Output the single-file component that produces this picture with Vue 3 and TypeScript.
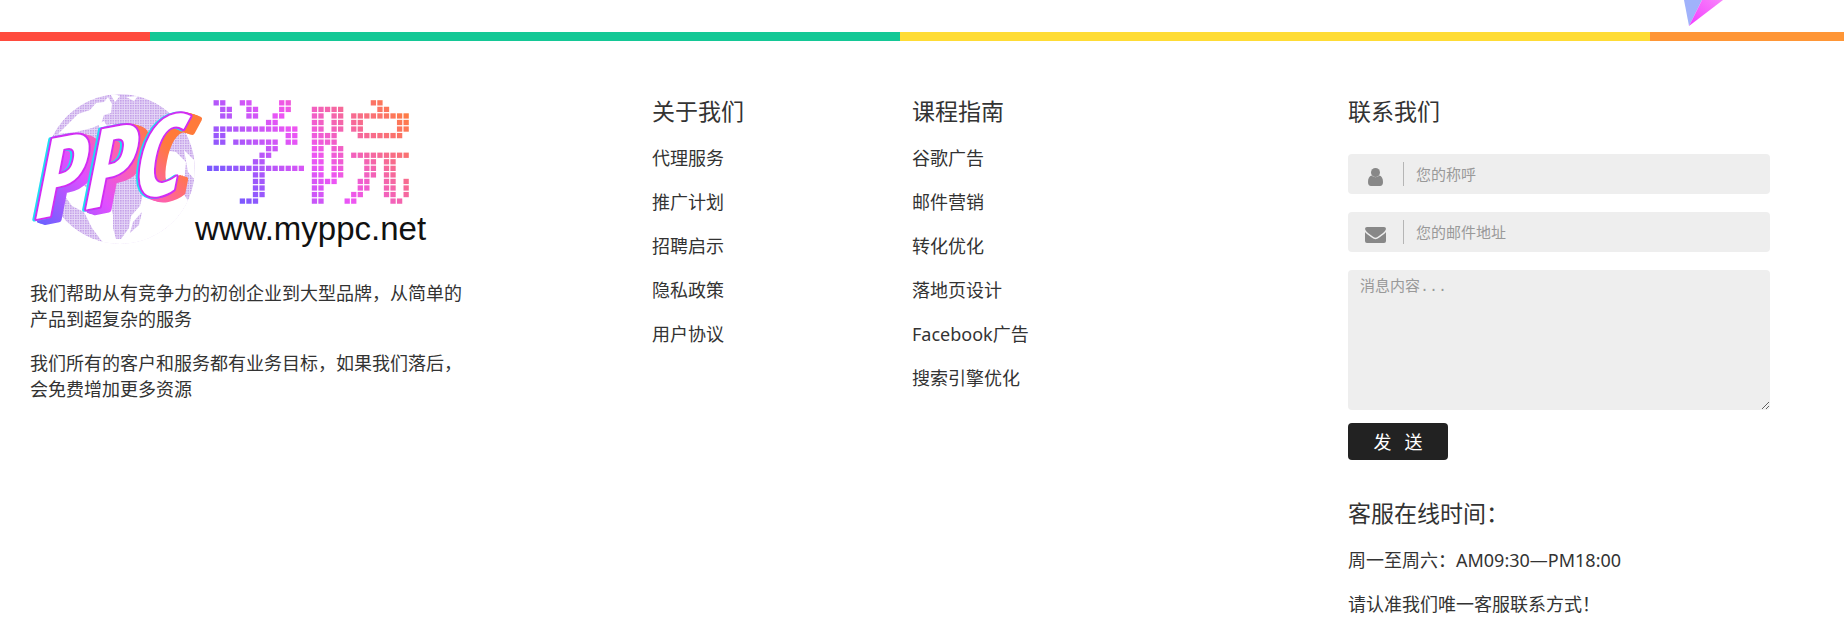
<script setup lang="ts">
interface LinkGroup {
  title: string
  links: string[]
}

const groups: LinkGroup[] = [
  { title: '关于我们', links: ['代理服务', '推广计划', '招聘启示', '隐私政策', '用户协议'] },
  { title: '课程指南', links: ['谷歌广告', '邮件营销', '转化优化', '落地页设计', 'Facebook广告', '搜索引擎优化'] },
]

// Mosaic of the brand mark, one character per tile.
const mosaic: string[] = [
  '.##..##....##............##....',
  '..##..##...##...#####.....##...',
  '..##..##..##....##.##.#########',
  '.........##.....##.##.##.....##',
  '.#############..##.##.##.....##',
  '.##.........##..####...#######.',
  '.##.#######.##..####...........',
  '.........##.....##.##..........',
  '........##......##.##.#########',
  '.......##.......##.##...##.##..',
  '###############.##.##...##.##..',
  '.......##.......##.##...##.##..',
  '.......##.......####...##..##.#',
  '.......##.......##.....##..##.#',
  '.......##.......##....##...##.#',
  '.....###........##...##.....##.',
]

const pitch = 6.55
const tiles = mosaic.flatMap((row, r) =>
  [...row].flatMap((cell, c) => (cell === '#' ? [{ x: 207 + c * pitch, y: 100.2 + r * pitch }] : [])),
)

const depth = [8, 6, 4, 2]
</script>

<template>
  <div class="page">
    <div class="top">
      <svg class="shard" width="40" height="27" viewBox="0 0 40 27" aria-hidden="true">
        <defs>
          <linearGradient id="shard" x1="0" y1="1" x2="1" y2="0">
            <stop offset="0" stop-color="#f33cff" />
            <stop offset="1" stop-color="#f884fb" />
          </linearGradient>
        </defs>
        <path d="M0 0H18L5 26Z" fill="#a0b2fb" />
        <path d="M18 0H39L5 26Z" fill="url(#shard)" />
      </svg>
    </div>
    <div class="stripe"></div>

    <footer class="footer">
      <section class="about">
        <svg class="logo" viewBox="30 90 410 165" role="img" aria-label="PPC学院">
          <defs>
            <linearGradient id="tile" gradientUnits="userSpaceOnUse" x1="235" y1="205" x2="385" y2="85">
              <stop offset="0" stop-color="#7459ff" />
              <stop offset="0.48" stop-color="#ed55f5" />
              <stop offset="1" stop-color="#ff7c42" />
            </linearGradient>
            <linearGradient id="brush" gradientUnits="userSpaceOnUse" x1="60" y1="215" x2="175" y2="130">
              <stop offset="0" stop-color="#5f62ff" />
              <stop offset="0.45" stop-color="#e04fff" />
              <stop offset="0.75" stop-color="#ff62a8" />
              <stop offset="1" stop-color="#ff7a3a" />
            </linearGradient>
            <pattern id="mesh" width="2.5" height="2.5" patternUnits="userSpaceOnUse">
              <rect width="2.5" height="2.5" fill="#e6d8f7" />
              <rect width="1.6" height="1.6" fill="#c4a0e8" />
            </pattern>
            <clipPath id="sphere"><circle cx="120" cy="169" r="75" /></clipPath>
          </defs>

          <g clip-path="url(#sphere)">
            <circle cx="120" cy="169" r="75" fill="url(#mesh)" />
            <path
              d="M58 134L66 126L78 114L90 110L96 103L104 102L108 97L112 104L111 113L104 115L101 124L92 128L76 132Z"
              fill="#fff"
            />
            <path d="M109 92L120 96L115 102Z M126 97L138 96L134 101Z" fill="#fff" />
            <path d="M98 124L104 121L107 126L112 124L116 129L124 125L130 133L120 134L110 130L102 133Z" fill="#fff" />
            <path
              d="M52 176L66 188L82 184L92 192L102 196L110 203L113 215L113 228L116 239L121 239L129 228L131 216L140 206L144 190L152 184L180 188L190 204L182 212L172 224L158 234L144 243L118 250L104 244L92 228L84 212L72 206L62 192Z"
              fill="#fff"
            />
            <path d="M150 140L160 136L164 150L176 152L186 162L184 184L170 180L152 190Z M184 150L194 160L195 180L188 172Z" fill="#fff" />
            <path d="M130 233L133 222L142 212L139 225Z" fill="url(#mesh)" />
          </g>

          <g class="brand" transform="rotate(-11 100 170) skewX(-9)">
            <text
              v-for="d in depth"
              :key="d"
              :x="55 + d"
              :y="207 + d / 2"
              fill="url(#brush)"
              stroke="url(#brush)"
              stroke-width="5"
            >PPC</text>
            <text x="52" y="206" fill="#22dcf4" stroke="#22dcf4" stroke-width="4">PPC</text>
            <text class="face" x="54" y="206">PPC</text>
          </g>

          <rect v-for="(t, i) in tiles" :key="i" :x="t.x" :y="t.y" width="5.3" height="5.3" fill="url(#tile)" />
          <text class="site" x="195" y="240">www.myppc.net</text>
        </svg>
        <p>我们帮助从有竞争力的初创企业到大型品牌，从简单的产品到超复杂的服务</p>
        <p>我们所有的客户和服务都有业务目标，如果我们落后，会免费增加更多资源</p>
      </section>

      <nav v-for="g in groups" :key="g.title" class="column" :aria-label="g.title">
        <h2>{{ g.title }}</h2>
        <ul>
          <li v-for="l in g.links" :key="l"><a href="#">{{ l }}</a></li>
        </ul>
      </nav>

      <section class="column">
        <h2>联系我们</h2>
        <form @submit.prevent>
          <div class="field">
            <label for="name" aria-label="您的称呼">
              <svg width="15" height="18" viewBox="0 0 15 18" aria-hidden="true">
                <path d="M3.5 7.5C1.3 8.3 0 10.5 0 14C0 16.5 1.1 18 3 18H12C13.9 18 15 16.5 15 14C15 10.5 13.7 8.3 11.5 7.5A5.5 5.5 0 0 1 3.5 7.5Z" />
                <circle cx="7.5" cy="4.5" r="4.5" />
              </svg>
            </label>
            <input id="name" type="text" placeholder="您的称呼" />
          </div>
          <div class="field">
            <label for="email" aria-label="您的邮件地址">
              <svg width="21" height="16" viewBox="0 0 21 16" aria-hidden="true">
                <path d="M0 2Q0 0 2 0H19Q21 0 21 2Q20.5 4 18 6L12.5 10Q10.5 11.5 8.5 10L3 6Q0.5 4 0 2Z" />
                <path d="M0 5Q1 6.5 7 10.8Q10.5 13.5 14 10.8Q20 6.5 21 5V14Q21 16 19 16H2Q0 16 0 14Z" />
              </svg>
            </label>
            <input id="email" type="email" placeholder="您的邮件地址" />
          </div>
          <textarea aria-label="消息内容" placeholder="消息内容..."></textarea>
          <button type="submit"><span>发</span><span>送</span></button>
        </form>
        <h2>客服在线时间：</h2>
        <p>周一至周六：AM09:30—PM18:00</p>
        <p>请认准我们唯一客服联系方式！</p>
      </section>
    </footer>
  </div>
</template>

<style>
body {
  margin: 0;
  background: #fff;
}
</style>

<style scoped>
.page {
  color: #333;
  font: 400 18px/26px "Noto Sans", "Noto Sans CJK SC", sans-serif;
}
.top {
  display: flex;
  justify-content: flex-end;
  height: 32px;
  padding-right: 120px;
}
.stripe {
  height: 9px;
  background: linear-gradient(90deg, #ff4b3e 150px, #14c896 150px 900px, #ffdc35 900px 1650px, #ff9636 1650px);
}
.footer {
  display: grid;
  grid-template-columns: 622fr 260fr 436fr 422fr;
  padding: 49px 74px 0 30px;
}
.about p {
  max-width: 434px;
}
.logo {
  display: block;
  width: 410px;
  height: 165px;
  margin-bottom: 25px;
  overflow: visible;
}
.brand text {
  font: italic 700 106px "Liberation Sans Narrow", "Open Sans Condensed", "Liberation Sans", sans-serif;
  stroke-linejoin: round;
}
.brand .face {
  fill: #fff;
  stroke: #d22cf4;
  stroke-width: 4px;
  paint-order: stroke;
}
.site {
  font: 400 33px "Liberation Sans", sans-serif;
  fill: #111;
}
.column {
  padding-top: 5px;
}
h2 {
  margin: 0 0 17px;
  font-size: 23px;
  font-weight: 400;
  line-height: 33px;
}
p {
  margin: 0 0 18px;
}
ul {
  margin: 0;
  padding: 0;
  list-style: none;
}
li {
  margin-bottom: 18px;
}
a {
  color: inherit;
  text-decoration: none;
}
form {
  display: flex;
  flex-direction: column;
  margin: 26px 0 37px;
}
.field {
  display: flex;
  align-items: center;
  height: 40px;
  margin-bottom: 18px;
  border-radius: 4px;
  background: #eee;
}
.field label {
  display: flex;
  align-items: center;
  justify-content: center;
  width: 56px;
  height: 24px;
  padding-top: 6px;
  box-sizing: border-box;
  border-right: 1px solid #b5b5b5;
  fill: #888;
}
.field input {
  flex: 1;
  min-width: 0;
  height: 36px;
  padding: 0 12px;
  border: 0;
  background: none;
  font: inherit;
  font-size: 15px;
}
textarea {
  box-sizing: border-box;
  width: 100%;
  height: 140px;
  padding: 8px 12px;
  border: 0;
  border-radius: 4px;
  background: #eee;
  font: 400 15px/20px "Liberation Mono", "Noto Sans CJK SC", monospace;
  resize: vertical;
}
::placeholder {
  color: #999;
  opacity: 1;
}
button {
  display: flex;
  align-items: center;
  justify-content: center;
  gap: 13px;
  width: 100px;
  height: 37px;
  margin-top: 13px;
  padding: 0;
  border: 0;
  border-radius: 4px;
  background: #222;
  color: #fff;
  font: inherit;
}
</style>
